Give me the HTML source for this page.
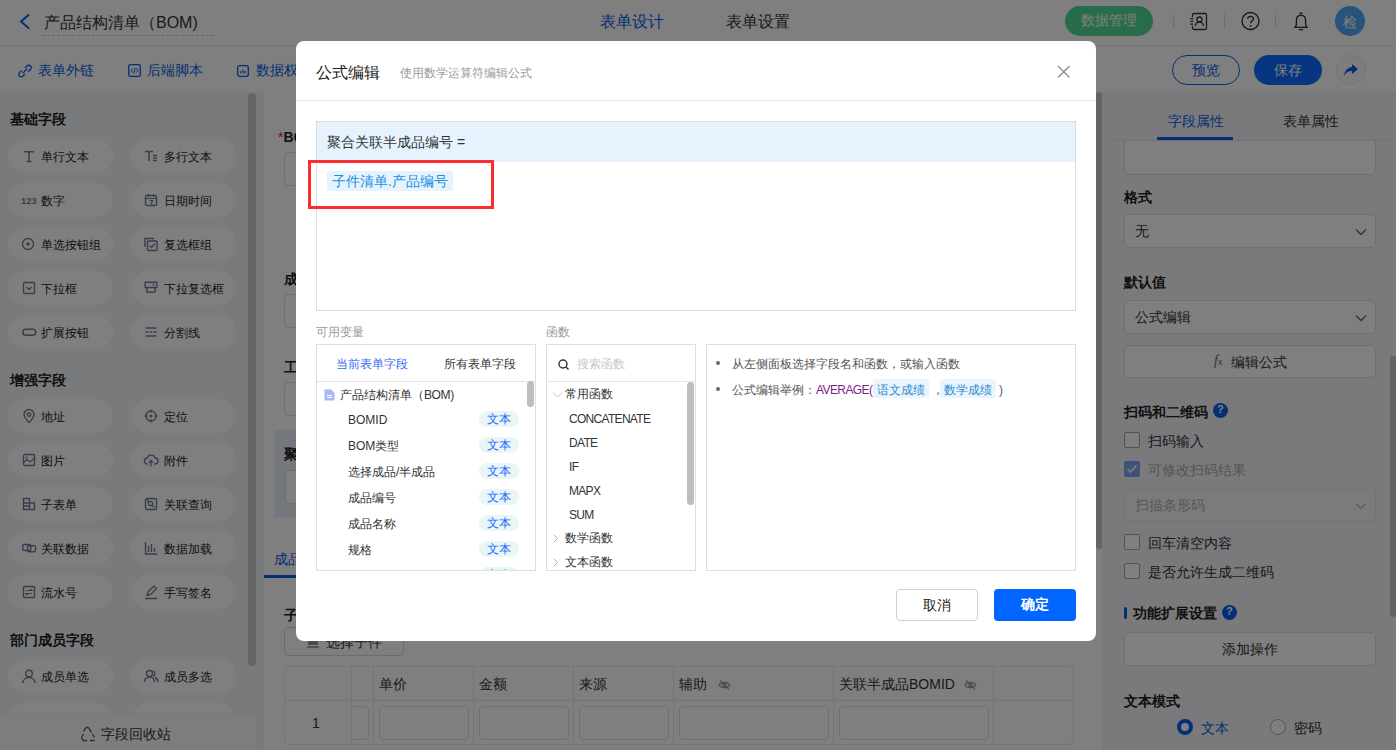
<!DOCTYPE html>
<html><head><meta charset="utf-8">
<style>
*{box-sizing:border-box;margin:0;padding:0}
html,body{width:1396px;height:750px;overflow:hidden;background:#fff;font-family:"Liberation Sans",sans-serif;color:#333}
.a{position:absolute}
.t{position:absolute;white-space:nowrap;line-height:1}
svg{position:absolute;overflow:visible}
/* header */
#hdr{left:0;top:0;width:1396px;height:46px;background:#fff;border-bottom:1px solid #e8e8e8}
#sub{left:0;top:46px;width:1396px;height:46px;background:#fff}
#left{left:0;top:92px;width:264px;height:658px;background:#f3f4f8}
#canvas{left:264px;top:92px;width:838px;height:658px;background:#fff}
#right{left:1102px;top:92px;width:294px;height:658px;background:#f4f5f8}
.pill{position:absolute;width:105px;height:34px;border-radius:17px;background:#fff}
.pt{font-size:12px;color:#222}
.h3{font-size:14px;font-weight:bold;color:#1f1f1f}
.inp{position:absolute;border:1px solid #dcdfe6;border-radius:4px;background:#fff}
#mask{left:0;top:0;width:1396px;height:750px;background:rgba(0,0,0,.5)}
#modal{left:296px;top:41px;width:800px;height:600px;background:#fff;border-radius:8px;overflow:hidden}
</style></head>
<body>
<div id="hdr" class="a">
<svg width="12" height="16" style="left:18px;top:14px"><path d="M10.5 1 L3 7.5 L10.5 14" fill="none" stroke="#0a5ee8" stroke-width="2" stroke-linecap="round" stroke-linejoin="round"/></svg>
<div class="t" style="left:44px;top:15px;font-size:16px;color:#333">产品结构清单（BOM)</div>
<div class="a" style="left:42px;top:35px;width:172px;height:0;border-top:1px dashed #cfcfcf"></div>
<div class="t" style="left:600px;top:14px;font-size:16px;color:#0a5ee8">表单设计</div>
<div class="t" style="left:726px;top:14px;font-size:16px;color:#333">表单设置</div>
<div class="a" style="left:1065px;top:6px;width:88px;height:30px;border-radius:15px;background:#52d996"></div>
<div class="t" style="left:1081px;top:13px;font-size:14px;color:#fff">数据管理</div>
<div class="a" style="left:1173px;top:14px;width:1px;height:14px;background:#d9d9d9"></div>
<div class="a" style="left:1224px;top:14px;width:1px;height:14px;background:#d9d9d9"></div>
<div class="a" style="left:1275px;top:14px;width:1px;height:14px;background:#d9d9d9"></div>
<svg width="20" height="20" style="left:1189px;top:12px"><path d="M3.5 5V3a1.5 1.5 0 0 1 1.5-1.5h11a1.5 1.5 0 0 1 1.5 1.5v13a1.5 1.5 0 0 1-1.5 1.5H5a1.5 1.5 0 0 1-1.5-1.5V14" fill="none" stroke="#333" stroke-width="1.3"/><path d="M1.3 6.6h3M1.3 9.4h3M1.3 12.2h3" stroke="#333" stroke-width="1.2"/><circle cx="10.4" cy="7.5" r="2.5" fill="none" stroke="#333" stroke-width="1.3"/><path d="M6.4 14a4 4 0 0 1 8 0" fill="none" stroke="#333" stroke-width="1.3"/></svg>
<svg width="20" height="20" style="left:1241px;top:11px"><circle cx="9.5" cy="10" r="8.5" fill="none" stroke="#333" stroke-width="1.4"/><path d="M6.8 7.8 C6.8 4.5 12.4 4.5 12.4 7.8 C12.4 10 9.6 10 9.6 12.2" fill="none" stroke="#333" stroke-width="1.4"/><circle cx="9.6" cy="14.8" r="0.9" fill="#333"/></svg>
<svg width="18" height="20" style="left:1293px;top:12px"><path d="M7 1.3h2" stroke="#333" stroke-width="1.4" stroke-linecap="round"/><path d="M1.8 15.4C3 14.6 3.4 13.6 3.4 12V8.2C3.4 5.2 5.4 3.2 8 3.2S12.6 5.2 12.6 8.2V12C12.6 13.6 13 14.6 14.2 15.4Z" fill="none" stroke="#333" stroke-width="1.4" stroke-linejoin="round"/><path d="M6.3 17.6h3.4" stroke="#333" stroke-width="1.4" stroke-linecap="round"/></svg>
<div class="a" style="left:1335px;top:6px;width:30px;height:30px;border-radius:50%;background:#4fa8f5"></div>
<div class="t" style="left:1343px;top:15px;font-size:14px;color:#fff">检</div>
</div>
<div id="sub" class="a">
<svg width="14" height="14" style="left:18px;top:18px"><path d="M5.2 8.8 L8.8 5.2 M7.5 3.5 L9 2 C10 1 11.8 1 12.6 2 C13.4 2.8 13.4 4.6 12.4 5.5 L10.5 7.4 M6.5 10.5 L5 12 C4 13 2.2 13 1.4 12 C0.6 11.2 0.6 9.4 1.6 8.5 L3.5 6.6" fill="none" stroke="#0a5ee8" stroke-width="1.3" stroke-linecap="round"/></svg>
<div class="t" style="left:38px;top:17px;font-size:14px;color:#0a5ee8">表单外链</div>
<svg width="14" height="14" style="left:128px;top:18px"><rect x="0.7" y="0.7" width="11.6" height="11.6" rx="1.5" fill="none" stroke="#0a5ee8" stroke-width="1.3"/><path d="M4.5 4.5 L3 6.5 L4.5 8.5 M8.5 4.5 L10 6.5 L8.5 8.5 M7.2 3.8 L5.8 9.2" fill="none" stroke="#0a5ee8" stroke-width="1"/></svg>
<div class="t" style="left:147px;top:17px;font-size:14px;color:#0a5ee8">后端脚本</div>
<svg width="14" height="14" style="left:237px;top:19px"><rect x="0.7" y="0.7" width="10.6" height="10.6" rx="2" fill="none" stroke="#0a5ee8" stroke-width="1.3"/><path d="M3.8 6 V8.5 M6 4.5 V8.5 M8.2 6 V8.5" stroke="#0a5ee8" stroke-width="1.1"/></svg>
<div class="t" style="left:256px;top:17px;font-size:14px;color:#0a5ee8">数据权限</div>
<div class="a" style="left:1172px;top:9px;width:68px;height:30px;border-radius:15px;border:1px solid #0a5ee8;background:#fff"></div>
<div class="t" style="left:1192px;top:17px;font-size:14px;color:#0a5ee8">预览</div>
<div class="a" style="left:1254px;top:9px;width:68px;height:30px;border-radius:15px;background:#0a6cff"></div>
<div class="t" style="left:1274px;top:17px;font-size:14px;color:#fff">保存</div>
<div class="a" style="left:1336px;top:9px;width:30px;height:30px;border-radius:50%;background:#fafbff;border:1px solid #e3e8f5"></div>
<svg width="16" height="14" style="left:1343px;top:17px"><path d="M9 1 L15 6 L9 11 V8 C5 8 2.5 9.5 1 13 C1.5 8 4.5 4.5 9 4 Z" fill="#0a5ee8"/></svg>
</div>
<div id="left" class="a">
<div class="t h3" style="left:10px;top:20px">基础字段</div>
<div class="pill" style="left:8px;top:47px"></div><svg width="14" height="14" style="left:22px;top:57px"><path d="M2 2.8h10M7 2.8v9.7M4.5 12.5h5" fill="none" stroke="#707c98" stroke-width="1.5"/></svg><div class="t pt" style="left:41px;top:59px">单行文本</div>
<div class="pill" style="left:131px;top:47px"></div><svg width="14" height="14" style="left:144px;top:57px"><path d="M1 2.5h8M5 2.5v9.5M9 6.5h4M9 9h4M9 11.5h4" fill="none" stroke="#707c98" stroke-width="1.5"/></svg><div class="t pt" style="left:164px;top:59px">多行文本</div>
<div class="pill" style="left:8px;top:91px"></div><svg width="14" height="14" style="left:22px;top:101px"><text x="-1" y="11" font-size="9.5" font-weight="bold" fill="#707c98" font-family="Liberation Sans">123</text></svg><div class="t pt" style="left:41px;top:103px">数字</div>
<div class="pill" style="left:131px;top:91px"></div><svg width="14" height="14" style="left:144px;top:101px"><rect x="1.5" y="2.5" width="11" height="10" rx="1.5" fill="none" stroke="#707c98" stroke-width="1.4"/><path d="M1.5 5.5h11M4.5 1v3M9.5 1v3M5.5 7.5h3l-1.5 4" fill="none" stroke="#707c98" stroke-width="1.2"/></svg><div class="t pt" style="left:164px;top:103px">日期时间</div>
<div class="pill" style="left:8px;top:135px"></div><svg width="14" height="14" style="left:22px;top:145px"><circle cx="6" cy="7" r="5.5" fill="none" stroke="#707c98" stroke-width="1.4"/><circle cx="6" cy="7" r="1.8" fill="#707c98"/></svg><div class="t pt" style="left:41px;top:147px">单选按钮组</div>
<div class="pill" style="left:131px;top:135px"></div><svg width="14" height="14" style="left:144px;top:145px"><path d="M1 10V1.5h9" fill="none" stroke="#707c98" stroke-width="1.4"/><rect x="3.5" y="4" width="9.5" height="9.5" rx="1" fill="none" stroke="#707c98" stroke-width="1.4"/><path d="M5.5 8.5l2 2 3.5-4" fill="none" stroke="#707c98" stroke-width="1.3"/></svg><div class="t pt" style="left:164px;top:147px">复选框组</div>
<div class="pill" style="left:8px;top:179px"></div><svg width="14" height="14" style="left:22px;top:189px"><rect x="1.5" y="1.5" width="11" height="11" rx="1.5" fill="none" stroke="#707c98" stroke-width="1.4"/><path d="M4.5 6l2.5 2.5L9.5 6" fill="none" stroke="#707c98" stroke-width="1.3"/></svg><div class="t pt" style="left:41px;top:191px">下拉框</div>
<div class="pill" style="left:131px;top:179px"></div><svg width="14" height="14" style="left:144px;top:189px"><path d="M1.2 1.2h11.6v5.3H1.2z" fill="none" stroke="#707c98" stroke-width="1.4" stroke-linejoin="round"/><path d="M2.8 6.5v3.8a1 1 0 0 0 1 1h6.4a1 1 0 0 0 1-1V6.5" fill="none" stroke="#707c98" stroke-width="1.4"/><path d="M8 3.2h3l-1.5 1.8z" fill="#707c98"/></svg><div class="t pt" style="left:164px;top:191px">下拉复选框</div>
<div class="pill" style="left:8px;top:223px"></div><svg width="14" height="14" style="left:22px;top:233px"><rect x="0.8" y="4.3" width="13" height="6" rx="3" fill="none" stroke="#707c98" stroke-width="1.5"/></svg><div class="t pt" style="left:41px;top:235px">扩展按钮</div>
<div class="pill" style="left:131px;top:223px"></div><svg width="14" height="14" style="left:144px;top:233px"><path d="M1.5 3h11M1.5 11h11M1.5 7h3M5.8 7h2.4M9.5 7h3" fill="none" stroke="#707c98" stroke-width="1.4"/></svg><div class="t pt" style="left:164px;top:235px">分割线</div>
<div class="t h3" style="left:10px;top:281px">增强字段</div>
<div class="pill" style="left:8px;top:307px"></div><svg width="14" height="14" style="left:22px;top:317px"><path d="M7 13.5C3.5 10 2 7.5 2 5.5a5 5 0 0 1 10 0c0 2-1.5 4.5-5 8z" fill="none" stroke="#707c98" stroke-width="1.4"/><circle cx="7" cy="5.6" r="1.8" fill="none" stroke="#707c98" stroke-width="1.3"/></svg><div class="t pt" style="left:41px;top:319px">地址</div>
<div class="pill" style="left:131px;top:307px"></div><svg width="14" height="14" style="left:144px;top:317px"><circle cx="7" cy="7" r="5" fill="none" stroke="#707c98" stroke-width="1.4"/><circle cx="7" cy="7" r="1.5" fill="#707c98"/><path d="M7 0.5v3M7 10.5v3M0.5 7h3M10.5 7h3" stroke="#707c98" stroke-width="1.4"/></svg><div class="t pt" style="left:164px;top:319px">定位</div>
<div class="pill" style="left:8px;top:351px"></div><svg width="14" height="14" style="left:22px;top:361px"><rect x="1.5" y="1.5" width="11" height="11" rx="1.5" fill="none" stroke="#707c98" stroke-width="1.4"/><path d="M1.5 9.5l3.5-3 3 2.5 4.5-4" fill="none" stroke="#707c98" stroke-width="1.2"/><circle cx="4.5" cy="4.5" r="1" fill="#707c98"/></svg><div class="t pt" style="left:41px;top:363px">图片</div>
<div class="pill" style="left:131px;top:351px"></div><svg width="14" height="14" style="left:144px;top:361px"><path d="M4 11H3.5A3 3 0 0 1 3.3 5 4 4 0 0 1 11 5a3 3 0 0 1 0 6H10" fill="none" stroke="#707c98" stroke-width="1.4"/><path d="M7 13.5V7.5M5 9.5l2-2 2 2" fill="none" stroke="#707c98" stroke-width="1.3"/></svg><div class="t pt" style="left:164px;top:363px">附件</div>
<div class="pill" style="left:8px;top:395px"></div><svg width="14" height="14" style="left:22px;top:405px"><path d="M1.5 1.5h6v11h-6zM7.5 6h5v6.5h-5M1.5 6h6M1.5 9h6" fill="none" stroke="#707c98" stroke-width="1.4"/></svg><div class="t pt" style="left:41px;top:407px">子表单</div>
<div class="pill" style="left:131px;top:395px"></div><svg width="14" height="14" style="left:144px;top:405px"><rect x="1.5" y="1.5" width="11" height="11" rx="1.5" fill="none" stroke="#707c98" stroke-width="1.4"/><circle cx="6.5" cy="6.5" r="2.2" fill="none" stroke="#707c98" stroke-width="1.3"/><path d="M8 8l2.5 2.5M4 1.5v4" stroke="#707c98" stroke-width="1.3"/></svg><div class="t pt" style="left:164px;top:407px">关联查询</div>
<div class="pill" style="left:8px;top:439px"></div><svg width="14" height="14" style="left:22px;top:449px"><rect x="0.8" y="3.5" width="8" height="6" rx="1.5" fill="none" stroke="#707c98" stroke-width="1.4"/><rect x="5.5" y="4.8" width="8" height="6" rx="1.5" fill="none" stroke="#707c98" stroke-width="1.4"/></svg><div class="t pt" style="left:41px;top:451px">关联数据</div>
<div class="pill" style="left:131px;top:439px"></div><svg width="14" height="14" style="left:144px;top:449px"><path d="M1.5 1v12h12M4.5 5v6M7.5 3v8M10.5 7v4" fill="none" stroke="#707c98" stroke-width="1.4"/></svg><div class="t pt" style="left:164px;top:451px">数据加载</div>
<div class="pill" style="left:8px;top:483px"></div><svg width="14" height="14" style="left:22px;top:493px"><rect x="1.5" y="1.5" width="11" height="11" rx="1" fill="none" stroke="#707c98" stroke-width="1.4"/><path d="M4 5.5h6l-1.5-1.5M10 8.5H4l1.5 1.5" fill="none" stroke="#707c98" stroke-width="1.2"/></svg><div class="t pt" style="left:41px;top:495px">流水号</div>
<div class="pill" style="left:131px;top:483px"></div><svg width="14" height="14" style="left:144px;top:493px"><path d="M3 10.5l1-3.5 6-6 2.5 2.5-6 6zM1 13.5h12" fill="none" stroke="#707c98" stroke-width="1.4" stroke-linejoin="round"/></svg><div class="t pt" style="left:164px;top:495px">手写签名</div>
<div class="t h3" style="left:10px;top:541px">部门成员字段</div>
<div class="pill" style="left:8px;top:567px"></div><svg width="14" height="14" style="left:22px;top:577px"><circle cx="7" cy="4.5" r="3.3" fill="none" stroke="#707c98" stroke-width="1.4"/><path d="M1 14c0-3.5 2.7-5.5 6-5.5s6 2 6 5.5" fill="none" stroke="#707c98" stroke-width="1.4"/></svg><div class="t pt" style="left:41px;top:579px">成员单选</div>
<div class="pill" style="left:131px;top:567px"></div><svg width="14" height="14" style="left:144px;top:577px"><circle cx="5.5" cy="4.5" r="3" fill="none" stroke="#707c98" stroke-width="1.4"/><path d="M0.5 13c0-3 2.2-5 5-5s5 2 5 5M9 1.8a3 3 0 0 1 0 5.6M11 8.5c1.8.6 3 2.3 3 4.5" fill="none" stroke="#707c98" stroke-width="1.4"/></svg><div class="t pt" style="left:164px;top:579px">成员多选</div>
<div class="pill" style="left:8px;top:611px"></div><svg width="14" height="14" style="left:22px;top:621px"></svg><div class="t pt" style="left:41px;top:623px"></div>
<div class="pill" style="left:131px;top:611px"></div><svg width="14" height="14" style="left:144px;top:621px"></svg><div class="t pt" style="left:164px;top:623px"></div>
<div class="a" style="left:248px;top:1px;width:8px;height:573px;border-radius:4px;background:#c9c9c9"></div>
<div class="a" style="left:0;top:621px;width:256px;height:37px;background:#fafafa;border-top:1px solid #f0f0f0"></div>
<svg width="16" height="16" style="left:80px;top:634px"><path d="M6 1.5L3.5 5.5M8.5 1.5l3 5M14.5 11.5l-2-3.5M10 14.5h4.5M1.5 11.5l2-3.5M1.5 11.5l1.5 3h4M6 1.5h2.5" fill="none" stroke="#555" stroke-width="1.3" stroke-linejoin="round"/></svg>
<div class="t" style="left:101px;top:635px;font-size:14px;color:#333">字段回收站</div>
</div>
<div id="canvas" class="a">
<div class="t" style="left:14px;top:38px;font-size:14px;font-weight:bold;color:#222"><span style="color:#e02020;font-weight:normal">*</span>BOMID</div>
<div class="inp" style="left:20px;top:60px;width:790px;height:34px"></div>
<div class="t" style="left:20px;top:180px;font-size:14px;font-weight:bold;color:#222">成品编号</div>
<div class="inp" style="left:20px;top:202px;width:790px;height:34px"></div>
<div class="t" style="left:20px;top:268px;font-size:14px;font-weight:bold;color:#222">工序</div>
<div class="inp" style="left:20px;top:290px;width:790px;height:34px"></div>
<div class="a" style="left:10px;top:338px;width:810px;height:88px;background:#e9eefb"></div>
<div class="t" style="left:20px;top:355px;font-size:14px;font-weight:bold;color:#222">聚合关联半成品编号</div>
<div class="inp" style="left:21px;top:378px;width:790px;height:34px"></div>
<div class="a" style="left:0;top:485px;width:820px;height:1px;background:#e8e8e8"></div>
<div class="t" style="left:10px;top:460px;font-size:14px;color:#0a5ee8">成品清单</div>
<div class="a" style="left:0;top:483px;width:80px;height:3px;background:#0a5ee8"></div>
<div class="t" style="left:20px;top:516px;font-size:14px;font-weight:bold;color:#222">子件清单</div>
<div class="a" style="left:20px;top:535px;width:120px;height:29px;border:1px solid #d9d9d9;border-radius:4px;background:#fff"></div>
<svg width="14" height="14" style="left:42px;top:542px"><path d="M1 13h12M3 11V5h8v6M5 7v4M9 7v4M7 7v4" fill="none" stroke="#555" stroke-width="1.2"/></svg><div class="t" style="left:62px;top:543px;font-size:14px;color:#333">选择子件</div>
<div class="a" style="left:20px;top:574px;width:790px;height:79px;border:1px solid #e8e8e8;border-radius:4px"></div>
<div class="a" style="left:20px;top:608px;width:790px;height:1px;background:#e8e8e8"></div>
<div class="a" style="left:87px;top:574px;width:1px;height:79px;background:#e8e8e8"></div>
<div class="a" style="left:109px;top:574px;width:1px;height:79px;background:#e8e8e8"></div>
<div class="a" style="left:209px;top:574px;width:1px;height:79px;background:#e8e8e8"></div>
<div class="a" style="left:309px;top:574px;width:1px;height:79px;background:#e8e8e8"></div>
<div class="a" style="left:409px;top:574px;width:1px;height:79px;background:#e8e8e8"></div>
<div class="a" style="left:569px;top:574px;width:1px;height:79px;background:#e8e8e8"></div>
<div class="a" style="left:729px;top:574px;width:1px;height:79px;background:#e8e8e8"></div>
<div class="t" style="left:48px;top:624px;font-size:14px;color:#333">1</div>
<div class="a" style="left:88px;top:575px;width:721px;height:77px;overflow:hidden">
<div class="inp" style="left:-50px;top:39px;width:67px;height:34px"></div>
<div class="inp" style="left:27px;top:39px;width:90px;height:34px"></div>
<div class="inp" style="left:127px;top:39px;width:90px;height:34px"></div>
<div class="inp" style="left:227px;top:39px;width:90px;height:34px"></div>
<div class="inp" style="left:327px;top:39px;width:150px;height:34px"></div>
<div class="inp" style="left:487px;top:39px;width:150px;height:34px"></div>
</div>
<div class="t" style="left:115px;top:585px;font-size:14px;color:#333">单价</div>
<div class="t" style="left:215px;top:585px;font-size:14px;color:#333">金额</div>
<div class="t" style="left:315px;top:585px;font-size:14px;color:#333">来源</div>
<div class="t" style="left:415px;top:585px;font-size:14px;color:#333">辅助</div>
<svg width="13" height="12" style="left:454px;top:587px"><path d="M1 6C3 2.5 10 2.5 12 6C10 9.5 3 9.5 1 6Z" fill="none" stroke="#999" stroke-width="1.1"/><circle cx="6.5" cy="6" r="1.8" fill="none" stroke="#999" stroke-width="1.1"/><path d="M2 1.5L11 10.5" stroke="#999" stroke-width="1.1"/></svg>
<div class="t" style="left:575px;top:585px;font-size:14px;color:#333">关联半成品BOMID</div>
<svg width="13" height="12" style="left:700px;top:587px"><path d="M1 6C3 2.5 10 2.5 12 6C10 9.5 3 9.5 1 6Z" fill="none" stroke="#999" stroke-width="1.1"/><circle cx="6.5" cy="6" r="1.8" fill="none" stroke="#999" stroke-width="1.1"/><path d="M2 1.5L11 10.5" stroke="#999" stroke-width="1.1"/></svg>
<div class="a" style="left:832px;top:0;width:6px;height:457px;border-radius:3px;background:#c9c9c9"></div>
</div>
<div id="right" class="a">
<div class="a" style="left:22px;top:40px;width:252px;height:43px;border:1px solid #dcdfe6;border-radius:4px;background:#fff"></div>
<div class="a" style="left:0;top:0;width:294px;height:49px;background:#f4f5f8"></div>
<div class="t" style="left:66px;top:22px;font-size:14px;color:#0a5ee8">字段属性</div>
<div class="t" style="left:181px;top:22px;font-size:14px;color:#333">表单属性</div>
<div class="a" style="left:8px;top:48px;width:286px;height:1px;background:#e4e4e4"></div>
<div class="a" style="left:55px;top:45px;width:76px;height:3px;background:#0a5ee8"></div>
<div class="t h3" style="left:22px;top:98px">格式</div>
<div class="inp" style="left:22px;top:122px;width:252px;height:34px"></div>
<div class="t" style="left:33px;top:132px;font-size:14px;color:#333">无</div>
<svg width="12" height="8" style="left:253px;top:136px"><path d="M1 1.5L6 6.5L11 1.5" fill="none" stroke="#666" stroke-width="1.3"/></svg>
<div class="t h3" style="left:22px;top:183px">默认值</div>
<div class="inp" style="left:22px;top:208px;width:252px;height:34px"></div>
<div class="t" style="left:33px;top:218px;font-size:14px;color:#333">公式编辑</div>
<svg width="12" height="8" style="left:253px;top:222px"><path d="M1 1.5L6 6.5L11 1.5" fill="none" stroke="#666" stroke-width="1.3"/></svg>
<div class="inp" style="left:22px;top:253px;width:252px;height:33px"></div>
<div class="t" style="left:112px;top:262px;font-size:14px;color:#666;font-family:'Liberation Serif',serif;font-style:italic">f<span style="font-size:9px;font-style:normal;font-family:'Liberation Sans',sans-serif">x</span></div>
<div class="t" style="left:129px;top:263px;font-size:14px;color:#333">编辑公式</div>
<div class="t h3" style="left:22px;top:313px">扫码和二维码</div>
<div class="a" style="left:111px;top:311px;width:15px;height:15px;border-radius:50%;background:#0a5ee8"></div>
<div class="t" style="left:115px;top:312px;font-size:11px;font-weight:bold;color:#fff">?</div>
<div class="a" style="left:22px;top:340px;width:16px;height:16px;border:1px solid #a9a9a9;border-radius:2px;background:#fff"></div>
<div class="t" style="left:46px;top:342px;font-size:14px;color:#333">扫码输入</div>
<div class="a" style="left:22px;top:369px;width:16px;height:16px;border-radius:2px;background:#7aa6f5"></div>
<svg width="12" height="10" style="left:24px;top:372px"><path d="M1.5 5L4.5 8L10.5 1.5" fill="none" stroke="#fff" stroke-width="1.6"/></svg>
<div class="t" style="left:46px;top:371px;font-size:14px;color:#a8a8a8">可修改扫码结果</div>
<div class="a" style="left:22px;top:397px;width:252px;height:33px;border:1px solid #e6e6e6;border-radius:4px;background:#f7f7f7"></div>
<div class="t" style="left:33px;top:406px;font-size:14px;color:#b0b0b0">扫描条形码</div>
<svg width="12" height="8" style="left:253px;top:410px"><path d="M1 1.5L6 6.5L11 1.5" fill="none" stroke="#bbb" stroke-width="1.3"/></svg>
<div class="a" style="left:22px;top:442px;width:16px;height:16px;border:1px solid #a9a9a9;border-radius:2px;background:#fff"></div>
<div class="t" style="left:46px;top:444px;font-size:14px;color:#333">回车清空内容</div>
<div class="a" style="left:22px;top:471px;width:16px;height:16px;border:1px solid #a9a9a9;border-radius:2px;background:#fff"></div>
<div class="t" style="left:46px;top:473px;font-size:14px;color:#333">是否允许生成二维码</div>
<div class="a" style="left:22px;top:515px;width:3px;height:12px;border-radius:1.5px;background:#0a5ee8"></div>
<div class="t h3" style="left:31px;top:514px">功能扩展设置</div>
<div class="a" style="left:120px;top:513px;width:15px;height:15px;border-radius:50%;background:#0a5ee8"></div>
<div class="t" style="left:124px;top:514px;font-size:11px;font-weight:bold;color:#fff">?</div>
<div class="inp" style="left:22px;top:540px;width:252px;height:34px"></div>
<div class="t" style="left:120px;top:550px;font-size:14px;color:#333">添加操作</div>
<div class="t h3" style="left:22px;top:602px">文本模式</div>
<div class="a" style="left:75px;top:627px;width:16px;height:16px;border-radius:50%;border:4.5px solid #0a5ee8;background:#fff"></div>
<div class="t" style="left:99px;top:629px;font-size:14px;color:#0a5ee8">文本</div>
<div class="a" style="left:168px;top:627px;width:16px;height:16px;border-radius:50%;border:1px solid #a9a9a9;background:#fff"></div>
<div class="t" style="left:192px;top:629px;font-size:14px;color:#333">密码</div>
<div class="a" style="left:288px;top:264px;width:6px;height:261px;border-radius:3px;background:#c9c9c9"></div>
</div>
<div id="mask" class="a"></div>
<div id="modal" class="a">
<div class="t" style="left:20px;top:24px;font-size:16px;color:#222">公式编辑</div>
<div class="t" style="left:104px;top:26px;font-size:12px;color:#999">使用数学运算符编辑公式</div>
<svg width="14" height="14" style="left:761px;top:24px"><path d="M1 1L12.5 12.5M12.5 1L1 12.5" stroke="#8a8a8a" stroke-width="1.3"/></svg>
<div class="a" style="left:0;top:59px;width:800px;height:1px;background:#e8e8e8"></div>
<div class="a" style="left:20px;top:80px;width:760px;height:190px;border:1px solid #dedede;background:#fff"></div>
<div class="a" style="left:21px;top:81px;width:758px;height:40px;background:#e6f3ff"></div>
<div class="t" style="left:31px;top:94px;font-size:14px;color:#333">聚合关联半成品编号 =</div>
<div class="a" style="left:31px;top:130px;width:126px;height:20px;border-radius:2px;background:#e6f3fe"></div>
<div class="t" style="left:36px;top:133px;font-size:14px;color:#1890e0">子件清单.产品编号</div>
<div class="a" style="left:12px;top:119px;width:186px;height:49px;border:3px solid #fb2b2e"></div>
<div class="t" style="left:20px;top:285px;font-size:12px;color:#999">可用变量</div>
<div class="t" style="left:250px;top:285px;font-size:12px;color:#999">函数</div>
<div class="a" style="left:20px;top:303px;width:220px;height:227px;border:1px solid #dedede;overflow:hidden">
<div class="a" style="left:0;top:36px;width:218px;height:1px;background:#e4e4e4"></div>
</div>
<div class="t" style="left:40px;top:317px;font-size:12px;color:#2f6cf0">当前表单字段</div>
<div class="t" style="left:148px;top:317px;font-size:12px;color:#333">所有表单字段</div>
<svg width="11" height="12" style="left:28px;top:348px"><path d="M0.5 0.5H7L10.5 4V11.5H0.5Z" fill="#a9b6f7"/><path d="M3 6.5h5M3 8.5h5" stroke="#fff" stroke-width="1"/></svg>
<div class="t" style="left:44px;top:348px;font-size:12px;color:#333">产品结构清单（<span style="letter-spacing:-0.4px">BOM)</span></div>
<div class="a" style="left:21px;top:340px;width:218px;height:189px;overflow:hidden">
<div style="position:absolute;left:-21px;top:-340px;width:300px;height:600px"><div class="t" style="left:52px;top:373px;font-size:12px;color:#333">BOMID</div><div class="a" style="left:183px;top:370px;width:40px;height:16px;border-radius:8px;background:#e8f6f6"></div><div class="t" style="left:191px;top:372px;font-size:12px;color:#1a66ff">文本</div><div class="t" style="left:52px;top:399px;font-size:12px;color:#333">BOM类型</div><div class="a" style="left:183px;top:396px;width:40px;height:16px;border-radius:8px;background:#e8f6f6"></div><div class="t" style="left:191px;top:398px;font-size:12px;color:#1a66ff">文本</div><div class="t" style="left:52px;top:425px;font-size:12px;color:#333">选择成品/半成品</div><div class="a" style="left:183px;top:422px;width:40px;height:16px;border-radius:8px;background:#e8f6f6"></div><div class="t" style="left:191px;top:424px;font-size:12px;color:#1a66ff">文本</div><div class="t" style="left:52px;top:451px;font-size:12px;color:#333">成品编号</div><div class="a" style="left:183px;top:448px;width:40px;height:16px;border-radius:8px;background:#e8f6f6"></div><div class="t" style="left:191px;top:450px;font-size:12px;color:#1a66ff">文本</div><div class="t" style="left:52px;top:477px;font-size:12px;color:#333">成品名称</div><div class="a" style="left:183px;top:474px;width:40px;height:16px;border-radius:8px;background:#e8f6f6"></div><div class="t" style="left:191px;top:476px;font-size:12px;color:#1a66ff">文本</div><div class="t" style="left:52px;top:503px;font-size:12px;color:#333">规格</div><div class="a" style="left:183px;top:500px;width:40px;height:16px;border-radius:8px;background:#e8f6f6"></div><div class="t" style="left:191px;top:502px;font-size:12px;color:#1a66ff">文本</div><div class="a" style="left:183px;top:526px;width:40px;height:16px;border-radius:8px;background:#e8f6f6"></div><div class="t" style="left:191px;top:528px;font-size:12px;color:#1a66ff">文本</div></div>
</div>
<div class="a" style="left:231px;top:340px;width:7px;height:26px;border-radius:4px;background:#bdbdbd"></div>
<div class="a" style="left:250px;top:303px;width:150px;height:227px;border:1px solid #dedede">
<div class="a" style="left:0;top:36px;width:148px;height:1px;background:#e4e4e4"></div>
</div>
<svg width="12" height="12" style="left:262px;top:318px"><circle cx="5" cy="5" r="4" fill="none" stroke="#333" stroke-width="1.4"/><path d="M8 8L10.5 10.5" stroke="#333" stroke-width="1.4"/></svg>
<div class="t" style="left:281px;top:317px;font-size:12px;color:#c8c8c8">搜索函数</div>
<div class="a" style="left:251px;top:340px;width:148px;height:189px;overflow:hidden">
<div style="position:absolute;left:-251px;top:-340px;width:500px;height:600px"><div class="t" style="left:269px;top:347px;font-size:12px;color:#333">常用函数</div><svg width="12" height="8" style="left:256px;top:350px"><path d="M1 1.5L5.5 6L10 1.5" fill="none" stroke="#c0c0c0" stroke-width="1"/></svg><div class="t" style="left:273px;top:372px;font-size:12px;color:#333;letter-spacing:-0.7px">CONCATENATE</div><div class="t" style="left:273px;top:396px;font-size:12px;color:#333;letter-spacing:-0.7px">DATE</div><div class="t" style="left:273px;top:420px;font-size:12px;color:#333;letter-spacing:-0.7px">IF</div><div class="t" style="left:273px;top:444px;font-size:12px;color:#333;letter-spacing:-0.7px">MAPX</div><div class="t" style="left:273px;top:468px;font-size:12px;color:#333;letter-spacing:-0.7px">SUM</div><div class="t" style="left:269px;top:491px;font-size:12px;color:#333">数学函数</div><svg width="6" height="10" style="left:257px;top:493px"><path d="M1 1L4.5 4.5L1 8" fill="none" stroke="#b0b0b0" stroke-width="1"/></svg><div class="t" style="left:269px;top:515px;font-size:12px;color:#333">文本函数</div><svg width="6" height="10" style="left:257px;top:517px"><path d="M1 1L4.5 4.5L1 8" fill="none" stroke="#b0b0b0" stroke-width="1"/></svg></div>
</div>
<div class="a" style="left:391px;top:341px;width:7px;height:123px;border-radius:4px;background:#bdbdbd"></div>
<div class="a" style="left:410px;top:303px;width:370px;height:227px;border:1px solid #dedede"></div>
<div class="a" style="left:420px;top:320px;width:4px;height:4px;border-radius:50%;background:#666"></div>
<div class="t" style="left:436px;top:317px;font-size:12px;color:#555">从左侧面板选择字段名和函数，或输入函数</div>
<div class="a" style="left:420px;top:346px;width:4px;height:4px;border-radius:50%;background:#666"></div>
<div class="t" style="left:436px;top:343px;font-size:12px;color:#555">公式编辑举例：<span style="color:#7a1f8a;letter-spacing:-0.6px">AVERAGE(</span></div>
<div class="a" style="left:577px;top:338px;width:56px;height:19px;border-radius:3px;background:#eaf4fd"></div>
<div class="t" style="left:581px;top:343px;font-size:12px;color:#2a8bd0">语文成绩</div>
<div class="t" style="left:636px;top:343px;font-size:12px;color:#555">，</div>
<div class="a" style="left:644px;top:338px;width:56px;height:19px;border-radius:3px;background:#eaf4fd"></div>
<div class="t" style="left:648px;top:343px;font-size:12px;color:#2a8bd0">数学成绩</div>
<div class="t" style="left:703px;top:343px;font-size:12px;color:#555">)</div>
<div class="a" style="left:600px;top:548px;width:82px;height:32px;border:1px solid #d0d0d0;border-radius:4px;background:#fff"></div>
<div class="t" style="left:627px;top:557px;font-size:14px;color:#222">取消</div>
<div class="a" style="left:698px;top:548px;width:82px;height:32px;border-radius:4px;background:#0066ff"></div>
<div class="t" style="left:725px;top:556px;font-size:14px;color:#fff;font-weight:bold">确定</div>
</div>
</body></html>
